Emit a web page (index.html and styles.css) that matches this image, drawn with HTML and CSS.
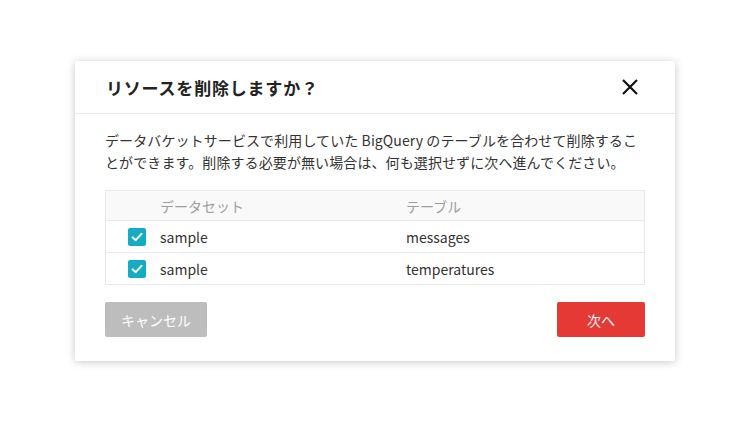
FILE: index.html
```html
<!DOCTYPE html>
<html lang="ja">
<head>
<meta charset="utf-8">
<link rel="stylesheet" href="styles.css">
</head>
<body>
<div class="dialog">
  <div class="header">
    <div class="title">リソースを削除しますか？</div>
    <svg class="close" width="18" height="18" viewBox="0 0 18 18"><path d="M2 2 L16 16 M16 2 L2 16" stroke="#111" stroke-width="2.2" fill="none"/></svg>
  </div>
  <div class="body">
    <p class="desc">データバケットサービスで利用していた BigQuery のテーブルを合わせて削除することができます。削除する必要が無い場合は、何も選択せずに次へ進んでください。</p>
    <div class="table">
      <div class="row head">
        <div class="cb-cell"></div>
        <div class="c1">データセット</div>
        <div class="c2">テーブル</div>
      </div>
      <div class="row">
        <div class="cb-cell"><span class="cb"><svg width="14" height="14" viewBox="0 0 14 14"><path d="M2.5 7.2 L5.7 10.2 L11.5 3.8" stroke="#fff" stroke-width="2" fill="none" stroke-linecap="round" stroke-linejoin="round"/></svg></span></div>
        <div class="c1">sample</div>
        <div class="c2">messages</div>
      </div>
      <div class="row">
        <div class="cb-cell"><span class="cb"><svg width="14" height="14" viewBox="0 0 14 14"><path d="M2.5 7.2 L5.7 10.2 L11.5 3.8" stroke="#fff" stroke-width="2" fill="none" stroke-linecap="round" stroke-linejoin="round"/></svg></span></div>
        <div class="c1">sample</div>
        <div class="c2">temperatures</div>
      </div>
    </div>
    <div class="actions">
      <button class="btn cancel">キャンセル</button>
      <button class="btn next">次へ</button>
    </div>
  </div>
</div>
</body>
</html>
```
FILE: styles.css
```css
html, body {
  margin: 0;
  padding: 0;
  background: #fff;
}
body {
  height: 422px;
  display: flex;
  align-items: center;
  justify-content: center;
  font-family: "Noto Sans CJK JP", "Noto Sans", sans-serif;
  color: #333;
}
.dialog {
  width: 600px;
  background: #fff;
  box-shadow: 0 1px 8px rgba(0,0,0,0.22);
  border-radius: 2px;
}
.header {
  height: 53px;
  border-bottom: 1px solid #e8e8e8;
  display: flex;
  align-items: center;
  justify-content: space-between;
  padding: 0 36px 0 31px;
  box-sizing: border-box;
}
.title {
  font-size: 17px;
  font-weight: 700;
  color: #222;
  letter-spacing: 0.8px;
}
.close {
  display: block;
}
.body {
  padding: 15px 30px 24px 30px;
}
.desc {
  margin: 0;
  font-size: 14px;
  line-height: 22px;
  color: #333;
  letter-spacing: 0.1px;
}
.table {
  margin-top: 17px;
  border: 1px solid #e8e8e8;
}
.row {
  display: flex;
  align-items: center;
  height: 31px;
  border-top: 1px solid #e8e8e8;
  font-size: 14px;
  color: #333;
}
.row:first-child {
  border-top: none;
}
.row.head {
  height: 29px;
  background: #f9f9f9;
  color: #9e9e9e;
  border-bottom: 1px solid #e8e8e8;
}
.row.head + .row {
  border-top: none;
}
.cb-cell {
  width: 54px;
  padding-left: 22px;
  box-sizing: border-box;
  display: flex;
  align-items: center;
}
.cb {
  width: 18px;
  height: 18px;
  background: #14acc4;
  border-radius: 2px;
  display: flex;
  align-items: center;
  justify-content: center;
}
.cb svg { display: block; }
.c1 {
  width: 246px;
}
.c2 {
  flex: 1;
}
.actions {
  display: flex;
  justify-content: space-between;
  margin-top: 17px;
}
.btn {
  height: 35px;
  border: none;
  border-radius: 2px;
  color: #fff;
  font-family: "Noto Sans CJK JP", "Noto Sans", sans-serif;
  font-size: 14px;
  padding: 0;
}
.cancel {
  width: 102px;
  background: #bdbdbd;
}
.next {
  width: 88px;
  background: #e53935;
}
```
